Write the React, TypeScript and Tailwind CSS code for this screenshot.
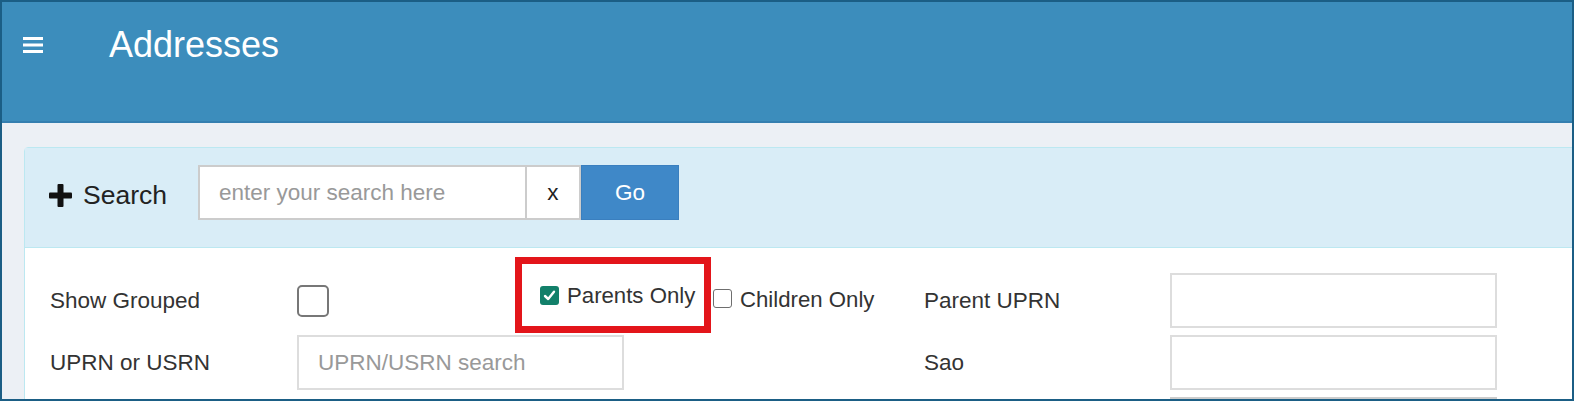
import React from "react";

function Hamburger() {
  return (
    <svg width="20" height="16" viewBox="0 0 20 16" className="block">
      <rect x="0" y="0" width="20" height="3" fill="#fff" />
      <rect x="0" y="6.5" width="20" height="3" fill="#fff" />
      <rect x="0" y="13" width="20" height="3" fill="#fff" />
    </svg>
  );
}

function PlusIcon() {
  return (
    <svg width="23" height="23" viewBox="0 0 23 23" className="block">
      <rect x="8.5" y="0" width="6" height="23" rx="1" fill="#111" />
      <rect x="0" y="8.5" width="23" height="6" rx="1" fill="#111" />
    </svg>
  );
}

function SmallCheck({ checked }: { checked?: boolean }) {
  if (checked) {
    return (
      <span className="flex h-[19px] w-[19px] items-center justify-center rounded-[3px] bg-[#12806a]">
        <svg width="13" height="13" viewBox="0 0 13 13">
          <path d="M2 7 L5.2 10 L11 2.8" stroke="#fff" strokeWidth="2.4" fill="none" strokeLinecap="round" strokeLinejoin="round" />
        </svg>
      </span>
    );
  }
  return <span className="block h-[19px] w-[19px] rounded-[3px] border-[1.5px] border-[#6e6e6e] bg-white" />;
}

export default function App() {
  return (
    <div
      className="h-[401px] w-[1574px] overflow-hidden border-2 border-[#1b5e85] bg-[#ecf0f5] text-[#333]"
      style={{ fontFamily: '"Liberation Sans", Arial, sans-serif' }}
    >
      {/* Header */}
      <div className="flex h-[121px] items-start border-b-2 border-[#347fb0] bg-[#3c8dbc] pt-[24px]">
        <div className="ml-[21px] mt-[11px]">
          <Hamburger />
        </div>
        <h1 className="ml-[66px] text-[36px] leading-[38px] text-white">Addresses</h1>
      </div>

      {/* Panel */}
      <div className="ml-[22px] mt-[24px] w-[1560px] rounded-t-[4px] border border-[#bce8f1] bg-white">
        <div className="flex items-start border-b border-[#bce8f1] bg-[#d9edf7] pb-[27px] pl-[24px] pt-[17px]">
          <div className="mt-[16px] flex items-center">
            <PlusIcon />
            <span className="ml-[11px] text-[26.5px] leading-[28px] text-[#222]">Search</span>
          </div>
          <div className="ml-[31px] flex h-[55px]">
            <div className="flex w-[329px] items-center border-2 border-[#ccc] bg-white pl-[19px] text-[22.5px] text-[#999]">
              enter your search here
            </div>
            <div className="flex w-[54px] items-center justify-center border-2 border-l-0 border-[#ccc] bg-white text-[22.5px] text-[#222]">
              x
            </div>
            <div className="flex w-[98px] items-center justify-center border border-[#3a7fbf] bg-[#3f88c8] text-[22.5px] text-white">
              Go
            </div>
          </div>
        </div>

        {/* Filters */}
        <div className="flex flex-col gap-[7px] pl-[25px] pt-[25px] text-[22.5px]">
          <div className="flex h-[55px] items-center">
            <div className="flex w-[874px] items-center">
              <span className="w-[247px]">Show Grouped</span>
              <span className="block h-[32px] w-[32px] rounded-[5px] border-2 border-[#777] bg-white" />
              <div className="ml-[186px] -mb-[5px] -mt-[16px] flex h-[76px] w-[196px] items-center border-[7px] border-[#e3151a] pl-[18px]">
                <SmallCheck checked />
                <span className="ml-[8px] mt-[2px] text-[22.2px]">Parents Only</span>
              </div>
              <div className="ml-[2px] -mt-[4px] flex items-center">
                <SmallCheck />
                <span className="ml-[8px] mt-[2px] text-[22.2px]">Children Only</span>
              </div>
            </div>
            <span className="w-[246px]">Parent UPRN</span>
            <div className="h-[55px] w-[327px] border-2 border-[#ddd] bg-white" />
          </div>

          <div className="flex h-[55px] items-center">
            <div className="flex w-[874px] items-center">
              <span className="w-[247px]">UPRN or USRN</span>
              <div className="flex h-[55px] w-[327px] items-center border-2 border-[#ddd] bg-white pl-[19px] text-[#999]">
                UPRN/USRN search
              </div>
            </div>
            <span className="w-[246px]">Sao</span>
            <div className="h-[55px] w-[327px] border-2 border-[#ddd] bg-white" />
          </div>

          <div className="flex h-[55px] items-center">
            <div className="w-[1120px]" />
            <div className="h-[55px] w-[327px] border-2 border-[#ccc] bg-[#f2f2f2]" />
          </div>
        </div>
      </div>
    </div>
  );
}
